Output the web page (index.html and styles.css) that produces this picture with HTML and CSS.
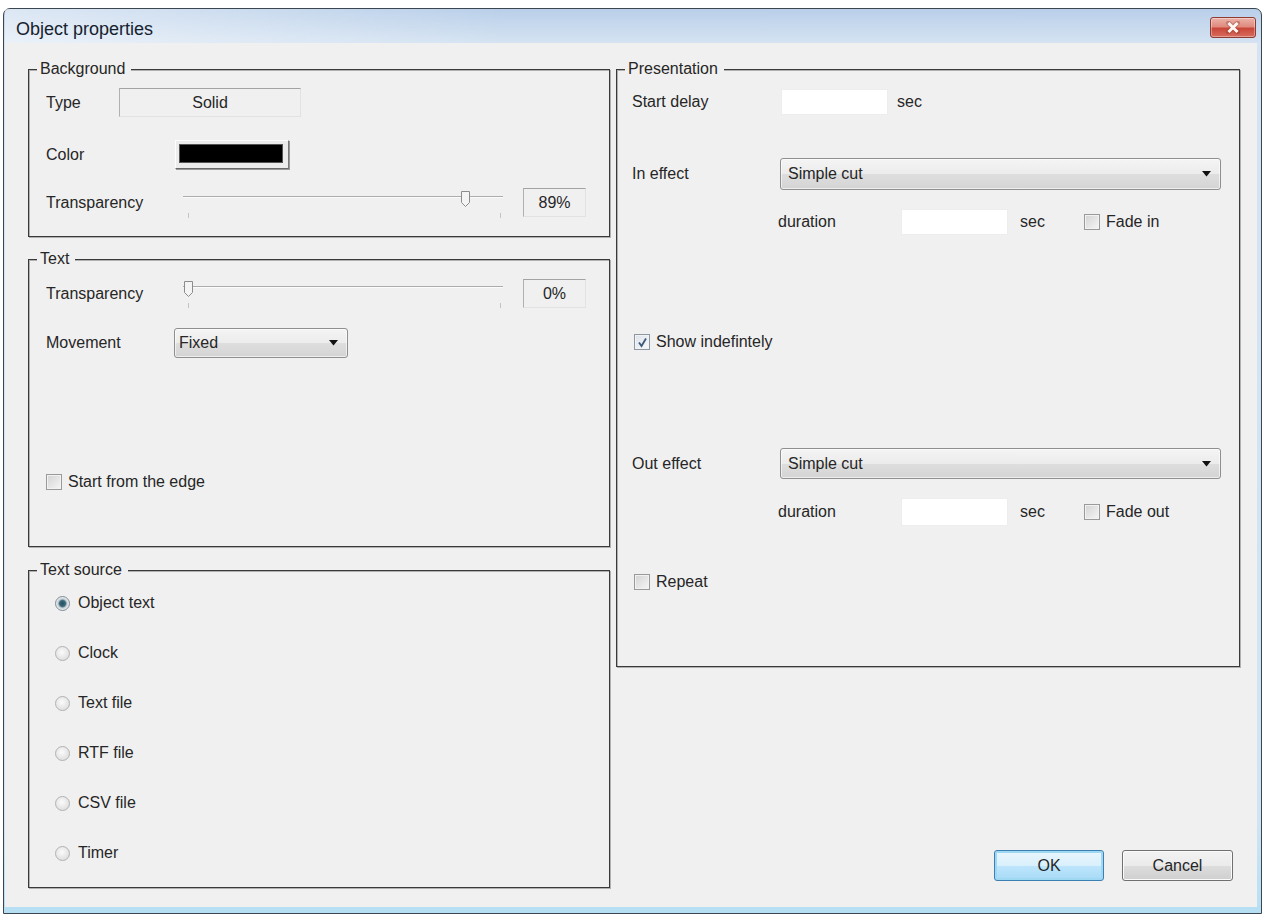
FILE: index.html
```html
<!DOCTYPE html>
<html lang="en">
<head>
  <meta charset="UTF-8">
  <meta name="viewport" content="width=device-width, initial-scale=1.0">
  <title>Object properties</title>
  <link rel="stylesheet" href="styles.css">
</head>
<body>
  <div class="window">
    <div class="titlebar">
      <span class="title">Object properties</span>
      <button class="close-btn" aria-label="Close">
        <svg width="16" height="13" viewBox="0 0 16 13">
          <path d="M3.5 2l9 9M12.5 2l-9 9" stroke="#7b2b22" stroke-width="5" stroke-linecap="round" opacity=".3"/>
          <path d="M3.5 2l9 9M12.5 2l-9 9" stroke="#fff6f2" stroke-width="3"/>
        </svg>
      </button>
    </div>

    <div class="client">
      <div class="col-left">
        <!-- Background -->
        <div class="group group-bg">
          <span class="legend">Background</span>
          <div class="row row-29">
            <span class="label w-73">Type</span>
            <div class="readonly-box type-box">Solid</div>
          </div>
          <div class="row row-29 mt-23">
            <span class="label w-129">Color</span>
            <button class="color-btn"><span class="swatch"></span></button>
          </div>
          <div class="row row-29 mt-19">
            <span class="label w-137">Transparency</span>
            <div class="slider">
              <div class="track"></div>
              <span class="tick tick-start"></span>
              <span class="tick tick-end"></span>
              <svg class="thumb" style="left: 277px" width="11" height="18" viewBox="0 0 11 18">
                <path d="M1.5 1.5h8v11l-4 4l-4-4z" fill="#f4f4f4" stroke="#8c8c8c"/>
              </svg>
            </div>
            <div class="readonly-box value-box">89%</div>
          </div>
        </div>

        <!-- Text -->
        <div class="group group-text">
          <span class="legend">Text</span>
          <div class="row row-31">
            <span class="label w-137">Transparency</span>
            <div class="slider">
              <div class="track"></div>
              <span class="tick tick-start"></span>
              <span class="tick tick-end"></span>
              <svg class="thumb" style="left: 0px" width="11" height="18" viewBox="0 0 11 18">
                <path d="M1.5 1.5h8v11l-4 4l-4-4z" fill="#f4f4f4" stroke="#8c8c8c"/>
              </svg>
            </div>
            <div class="readonly-box value-box">0%</div>
          </div>
          <div class="row row-30 mt-19">
            <span class="label w-128">Movement</span>
            <div class="combo combo-small">
              <span>Fixed</span>
              <svg width="9" height="6" viewBox="0 0 9 6"><path d="M0 0h9L4.5 5.5z" fill="#111"/></svg>
            </div>
          </div>
          <div class="row row-20 edge-row">
            <span class="check"></span>
            <span class="check-label">Start from the edge</span>
          </div>
        </div>

        <!-- Text source -->
        <div class="group group-src">
          <span class="legend">Text source</span>
          <div class="radio-list">
            <div class="row row-20"><span class="radio on"></span><span class="radio-label">Object text</span></div>
            <div class="row row-20"><span class="radio"></span><span class="radio-label">Clock</span></div>
            <div class="row row-20"><span class="radio"></span><span class="radio-label">Text file</span></div>
            <div class="row row-20"><span class="radio"></span><span class="radio-label">RTF file</span></div>
            <div class="row row-20"><span class="radio"></span><span class="radio-label">CSV file</span></div>
            <div class="row row-20"><span class="radio"></span><span class="radio-label">Timer</span></div>
          </div>
        </div>
      </div>

      <div class="col-right">
        <!-- Presentation -->
        <div class="group group-pres">
          <span class="legend">Presentation</span>
          <div class="row row-26">
            <span class="label w-149">Start delay</span>
            <div class="input w-107"></div>
            <span class="unit">sec</span>
          </div>

          <div class="row row-32 mt-43">
            <span class="label w-148">In effect</span>
            <div class="combo combo-wide">
              <span>Simple cut</span>
              <svg width="9" height="6" viewBox="0 0 9 6"><path d="M0 0h9L4.5 5.5z" fill="#111"/></svg>
            </div>
          </div>
          <div class="row row-26 mt-19 indent">
            <span class="label w-123">duration</span>
            <div class="input w-107"></div>
            <span class="unit unit-wide">sec</span>
            <span class="check"></span>
            <span class="check-label">Fade in</span>
          </div>

          <div class="row row-20 mt-97 pres-check">
            <span class="check checked">
              <svg width="13" height="13" viewBox="0 0 13 13"><path d="M3 6.5l2.5 3.5L10 2.5" fill="none" stroke="#3e5a78" stroke-width="1.8"/></svg>
            </span>
            <span class="check-label">Show indefintely</span>
          </div>

          <div class="row row-31 mt-96">
            <span class="label w-148">Out effect</span>
            <div class="combo combo-wide">
              <span>Simple cut</span>
              <svg width="9" height="6" viewBox="0 0 9 6"><path d="M0 0h9L4.5 5.5z" fill="#111"/></svg>
            </div>
          </div>
          <div class="row row-28 mt-19 indent">
            <span class="label w-123">duration</span>
            <div class="input w-107"></div>
            <span class="unit unit-wide">sec</span>
            <span class="check"></span>
            <span class="check-label">Fade out</span>
          </div>

          <div class="row row-20 mt-46 pres-check">
            <span class="check"></span>
            <span class="check-label">Repeat</span>
          </div>
        </div>

        <div class="buttons">
          <button class="btn btn-default">OK</button>
          <button class="btn">Cancel</button>
        </div>
      </div>
    </div>
  </div>
</body>
</html>
```

FILE: styles.css
```css
* {
  box-sizing: border-box;
}
body {
  margin: 0;
  background: #fff;
  font-family: "Liberation Sans", Arial, sans-serif;
  font-size: 16px;
  color: #262626;
}
button {
  font-family: inherit;
}

/* window frame */
.window {
  width: 1259px;
  height: 906px;
  margin: 8px 0 0 3px;
  padding: 0 4px 6px 1px;
  display: flex;
  flex-direction: column;
  border: 1px solid #3c4650;
  border-radius: 7px 7px 0 0;
  background: linear-gradient(#b9cfe9, #d5e3f2 34px, #cfe4f4 90%, #b6dff4);
}
.titlebar {
  height: 34px;
  display: flex;
  justify-content: space-between;
  align-items: flex-start;
  padding: 0 1px 0 11px;
  background: linear-gradient(to right, rgba(255, 255, 255, 0.5), rgba(255, 255, 255, 0) 40%);
}
.title {
  margin-top: 10px;
  line-height: 20px;
  font-size: 18px;
  color: #16222f;
}
.close-btn {
  width: 46px;
  height: 21px;
  margin-top: 8px;
  padding: 0;
  display: flex;
  align-items: center;
  justify-content: center;
  border: 1px solid #8d3b33;
  border-radius: 3px;
  background: linear-gradient(#ecb3aa, #df8b7e 45%, #c9473a 55%, #d86e5f);
  box-shadow: inset 0 0 0 1px rgba(255, 255, 255, 0.35);
}

/* client area */
.client {
  flex: 1;
  display: flex;
  gap: 6px;
  padding: 26px 17px 0 23px;
  background: #f0f0f0;
}
.col-left {
  width: 582px;
  display: flex;
  flex-direction: column;
}
.col-right {
  width: 624px;
  display: flex;
  flex-direction: column;
}

/* group boxes */
.group {
  position: relative;
  display: flex;
  flex-direction: column;
  border: 1px solid #3a3a3a;
  box-shadow: 1px 1px 0 #b0b0b0, inset 1px 1px 0 #b0b0b0;
  padding: 18px 16px 0 17px;
}
.legend {
  position: absolute;
  top: -11px;
  left: 8px;
  padding: 0 6px 0 3px;
  line-height: 20px;
  background: #f0f0f0;
}
.group-bg {
  height: 168px;
}
.group-text {
  height: 288px;
  margin-top: 22px;
}
.group-src {
  height: 318px;
  margin-top: 23px;
  padding-top: 22px;
}
.group-pres {
  height: 598px;
  padding: 19px 16px 0 15px;
}

/* rows */
.row {
  display: flex;
  align-items: center;
}
.row-20 { height: 20px; }
.row-26 { height: 26px; }
.row-28 { height: 28px; }
.row-29 { height: 29px; }
.row-30 { height: 30px; }
.row-31 { height: 31px; }
.row-32 { height: 32px; }
.mt-19 { margin-top: 19px; }
.mt-23 { margin-top: 23px; }
.mt-43 { margin-top: 43px; }
.mt-46 { margin-top: 46px; }
.mt-96 { margin-top: 96px; }
.mt-97 { margin-top: 97px; }
.label {
  flex: none;
}
.w-73 { width: 73px; }
.w-107 { width: 107px; }
.w-123 { width: 123px; }
.w-128 { width: 128px; }
.w-129 { width: 129px; }
.w-137 { width: 137px; }
.w-148 { width: 148px; }
.w-149 { width: 149px; }
.indent {
  padding-left: 146px;
}

/* read-only fields */
.readonly-box {
  height: 29px;
  display: flex;
  align-items: center;
  justify-content: center;
  border: 1px solid;
  border-color: #a3a3a3 #e2e2e2 #e2e2e2 #b0b0b0;
  background: #f0f0f0;
}
.type-box {
  width: 182px;
}
.value-box {
  width: 63px;
  margin-left: 20px;
}

/* colour button */
.color-btn {
  width: 114px;
  height: 29px;
  padding: 4px 6px 6px 4px;
  border: 1px solid;
  border-color: #fdfdfd #7a7a7a #6a6a6a #fdfdfd;
  background: #ececec;
  box-shadow: 1px 1px 0 #9a9a9a;
}
.swatch {
  display: block;
  width: 100%;
  height: 100%;
  background: #000;
  box-shadow: 0 0 0 1px #555;
}

/* slider */
.slider {
  position: relative;
  width: 320px;
  height: 100%;
}
.track {
  position: absolute;
  top: 8px;
  left: 0;
  right: 0;
  height: 2px;
  border-top: 1px solid #acacac;
  border-bottom: 1px solid #fbfbfb;
}
.tick {
  position: absolute;
  top: 25px;
  width: 1px;
  height: 5px;
  background: #c4c4c4;
}
.tick-start { left: 5px; }
.tick-end { left: 317px; }
.thumb {
  position: absolute;
  top: 2px;
}

/* combo boxes */
.combo {
  height: 100%;
  display: flex;
  align-items: center;
  justify-content: space-between;
  padding: 0 9px 0 4px;
  border: 1px solid #8e8f8f;
  border-radius: 3px;
  background: linear-gradient(#f4f4f4, #ececec 50%, #dedede 51%, #d4d4d4);
  box-shadow: inset 0 0 0 1px rgba(255, 255, 255, 0.6);
}
.combo-small {
  width: 174px;
}
.combo-wide {
  width: 441px;
  padding-left: 7px;
}

/* text inputs */
.input {
  height: 100%;
  background: #fff;
  border: 1px solid #ededed;
}
.unit {
  margin-left: 9px;
}
.unit-wide {
  width: 64px;
  margin-left: 12px;
}

/* checkboxes and radios */
.check {
  flex: none;
  width: 16px;
  height: 16px;
  display: flex;
  align-items: center;
  justify-content: center;
  border: 1px solid #9a9a9a;
  background: linear-gradient(135deg, #d3d3d3, #f6f6f6);
  box-shadow: inset 0 0 0 1px #f2f2f2;
}
.check.checked {
  border-color: #8b97a3;
  background: linear-gradient(135deg, #dde3ea, #f7f9fb);
}
.check-label {
  margin-left: 6px;
}
.edge-row {
  margin-top: 114px;
}
.pres-check {
  padding-left: 2px;
}
.radio-list {
  display: flex;
  flex-direction: column;
  gap: 30px;
  padding-left: 9px;
}
.radio {
  flex: none;
  width: 15px;
  height: 15px;
  border-radius: 50%;
  border: 1px solid #b2b2b2;
  background: radial-gradient(circle at 45% 40%, #fbfbfb, #d6d6d6);
}
.radio.on {
  border-color: #7e8b94;
  background: radial-gradient(circle, #244f60 0, #3d6a7b 3px, #c2ced4 4.5px, #eef1f3 6.5px);
}
.radio-label {
  margin-left: 8px;
}

/* dialog buttons */
.buttons {
  margin-top: auto;
  margin-bottom: 26px;
  padding-right: 7px;
  display: flex;
  justify-content: flex-end;
  gap: 18px;
}
.btn {
  width: 111px;
  height: 31px;
  font-size: 16px;
  color: #262626;
  border: 1px solid #707070;
  border-radius: 3px;
  background: linear-gradient(#f2f2f2, #ebebeb 50%, #dddddd 51%, #cfcfcf);
  box-shadow: inset 0 0 0 1px #fbfbfb;
}
.btn-default {
  width: 110px;
  border-color: #3c7fb1;
  background: linear-gradient(#eaf6fd, #d9f0fc 50%, #bee6fd 51%, #a7d9f5);
  box-shadow: inset 0 0 0 2px #9fd8f2;
}
```
